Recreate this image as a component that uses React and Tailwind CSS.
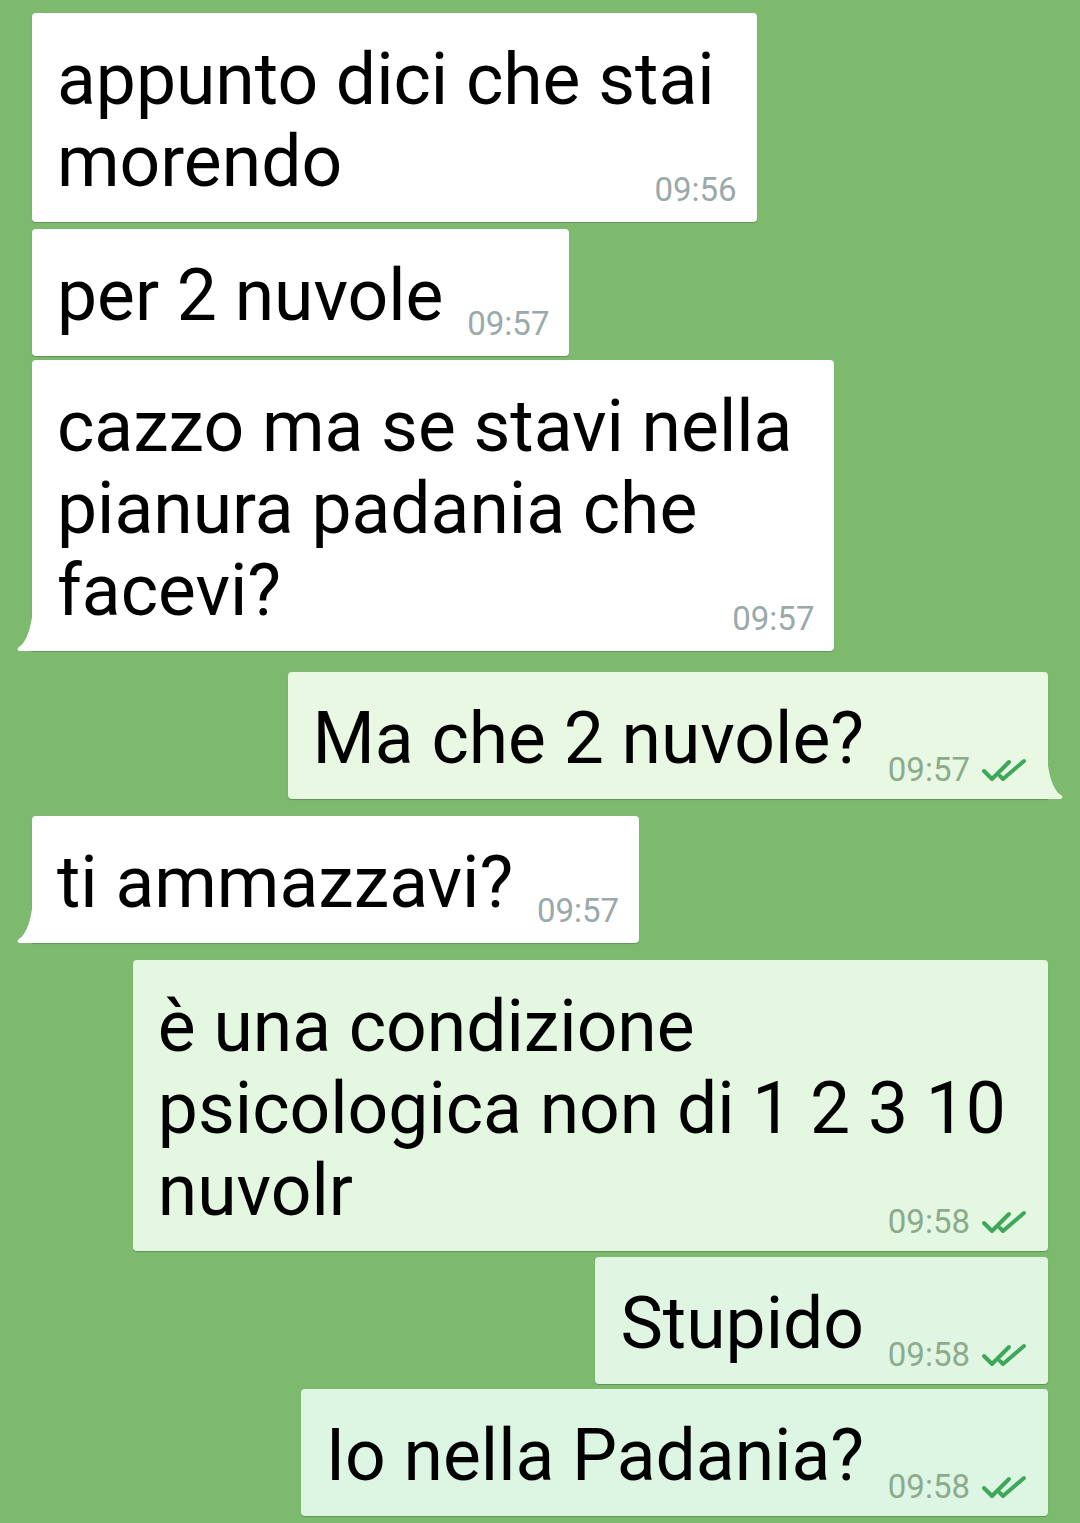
import React from 'react';

const messages = [
  { id: 1, out: false, lines: ['appunto dici che stai', 'morendo'], time: '09:56', mt: 'mt-[13px]' },
  { id: 2, out: false, lines: ['per 2 nuvole'], time: '09:57', mt: 'mt-[7px]' },
  { id: 3, out: false, lines: ['cazzo ma se stavi nella', 'pianura padania che', 'facevi?'], time: '09:57', mt: 'mt-[4px]', tail: true },
  { id: 4, out: true, lines: ['Ma che 2 nuvole?'], time: '09:57', mt: 'mt-[21px]', tail: true, bg: 'bg-[#e8f8e3]' },
  { id: 5, out: false, lines: ['ti ammazzavi?'], time: '09:57', mt: 'mt-[17px]', tail: true },
  { id: 6, out: true, lines: ['è una condizione', 'psicologica non di 1 2 3 10', 'nuvolr'], time: '09:58', mt: 'mt-[17px]', bg: 'bg-[#e3f7e1]' },
  { id: 7, out: true, lines: ['Stupido'], time: '09:58', mt: 'mt-[6px]', bg: 'bg-[#e0f6e2]' },
  { id: 8, out: true, lines: ['Io nella Padania?'], time: '09:58', mt: 'mt-[5px]', bg: 'bg-[#ddf5e3]' },
];

function DoubleCheck() {
  return (
    <svg width="48" height="24" viewBox="0 0 48 24" fill="none" className="inline-block">
      <path d="M4 13 L12 21 L29 4" stroke="#3fa75a" strokeWidth="4" strokeLinecap="round" strokeLinejoin="round" />
      <path d="M20 18 L23 21 L44 3" stroke="#3fa75a" strokeWidth="4" strokeLinecap="round" strokeLinejoin="round" />
    </svg>
  );
}

function Tail({ out, color }) {
  if (out) {
    return (
      <svg width="18" height="64" viewBox="0 0 18 64" className="absolute right-[-16px] bottom-0">
        <path d="M0 0 C0 40 8 56 15 60 Q18 62 15 64 L0 64 Z" fill={color} />
      </svg>
    );
  }
  return (
    <svg width="18" height="64" viewBox="0 0 18 64" className="absolute left-[-16px] bottom-0">
      <path d="M18 0 C18 40 10 56 3 60 Q0 62 3 64 L18 64 Z" fill={color} />
    </svg>
  );
}

function Bubble({ msg }) {
  const last = msg.lines.length - 1;
  const bg = msg.out ? msg.bg : 'bg-white';
  const tailColor = msg.out ? '#e8f8e3' : '#ffffff';
  return (
    <div className={`flex ${msg.out ? 'justify-end pr-[32px]' : 'justify-start pl-[32px]'} ${msg.mt}`}>
      <div className={`relative w-fit ${bg} ${msg.tail ? (msg.out ? 'rounded-[4px] rounded-br-none' : 'rounded-[4px] rounded-bl-none') : 'rounded-[4px]'} shadow-[0_1px_1px_rgba(0,0,0,0.22)] pl-[25px] pr-[20px] pt-[26px] pb-[19px]`}>
        {msg.lines.map((line, i) => (
          <div key={i} className="whitespace-nowrap text-[71.4px] leading-[82px] text-black pr-[22px]">
            {line}
            {i === last && <span className={`inline-block ${msg.out ? 'w-[142px]' : 'w-[84px]'}`} />}
          </div>
        ))}
        <div className={`absolute right-[20px] ${msg.out ? 'bottom-[13px]' : 'bottom-[16px]'} flex items-center gap-[10px] text-[33px] leading-none ${msg.out ? 'text-[#8cab8d]' : 'text-[#9aa9a9]'}`}>
          <span>{msg.time}</span>
          {msg.out && <DoubleCheck />}
        </div>
        {msg.tail && <Tail out={msg.out} color={tailColor} />}
      </div>
    </div>
  );
}

export default function App() {
  return (
    <div className="w-[1080px] h-[1523px] overflow-hidden bg-[#7dba6e]" style={{ fontFamily: 'Roboto, "Noto Sans", sans-serif' }}>
      {messages.map((m) => (
        <Bubble key={m.id} msg={m} />
      ))}
    </div>
  );
}
